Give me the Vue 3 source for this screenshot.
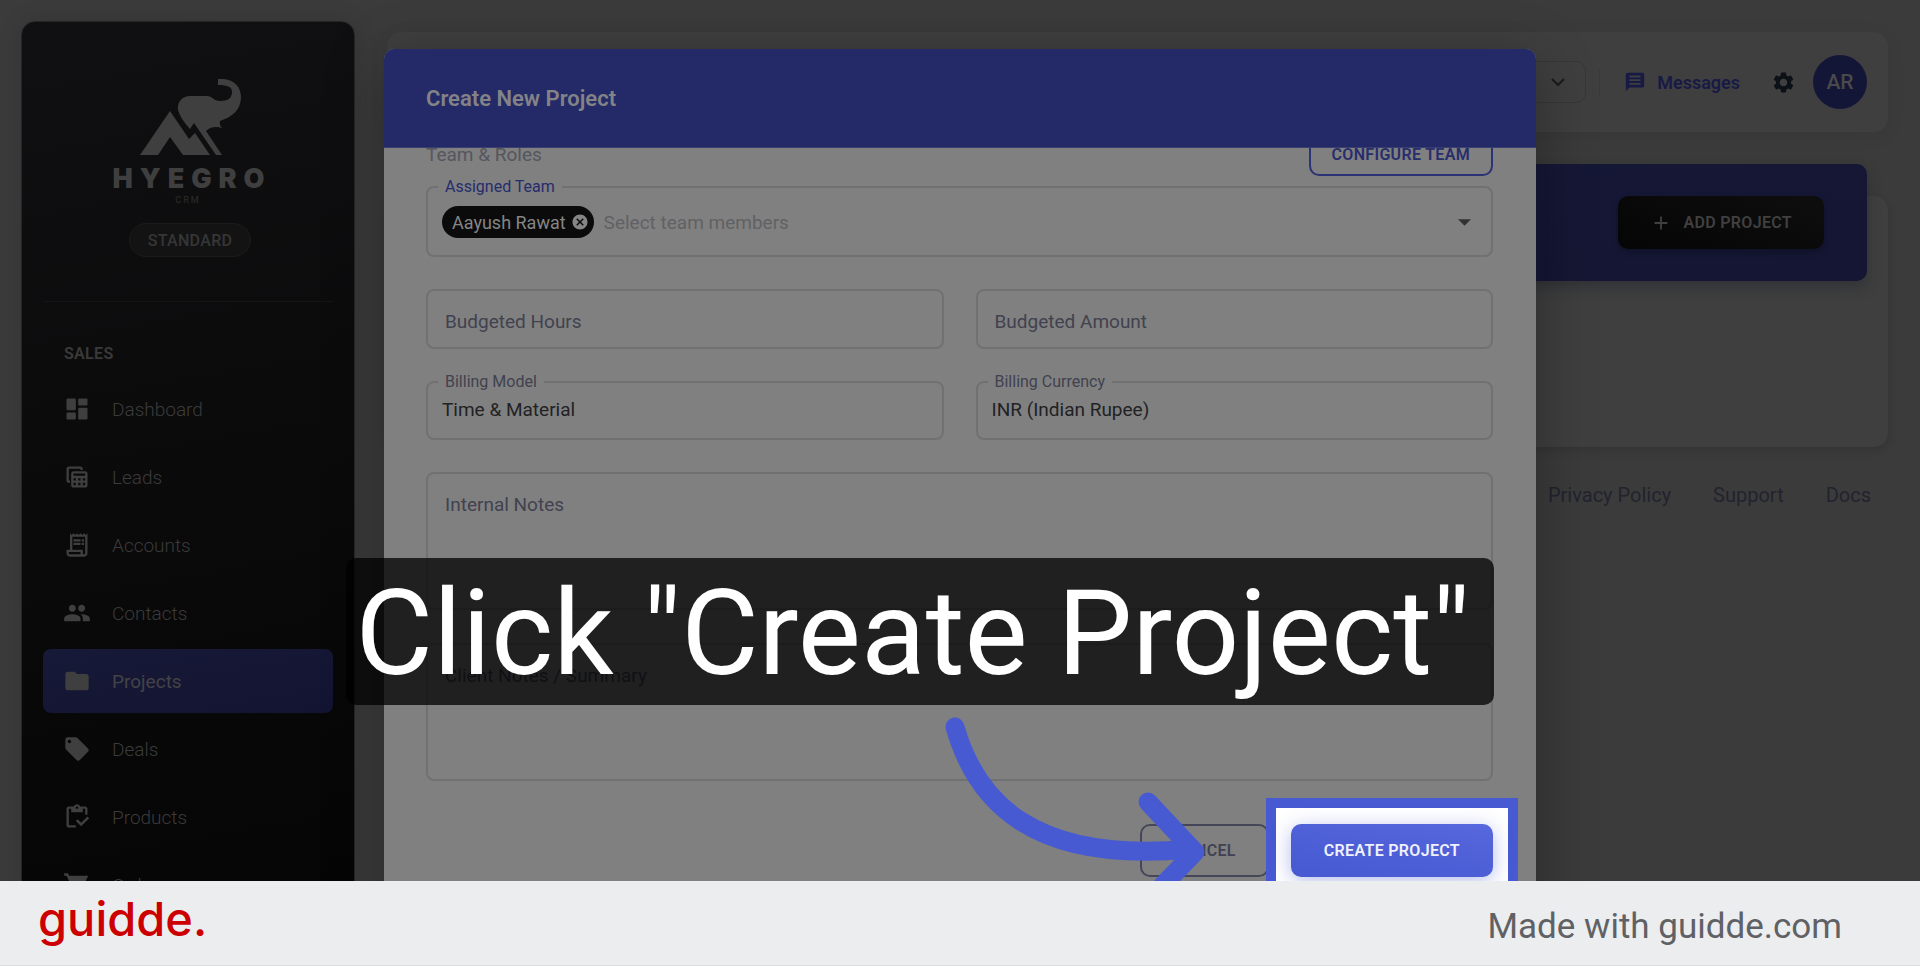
<script setup>
import { ref } from 'vue'

const navItems = [
  { label: 'Dashboard', icon: 'M4 3h6a1 1 0 0 1 1 1v8a1 1 0 0 1-1 1H4a1 1 0 0 1-1-1V4a1 1 0 0 1 1-1zM4 15h6a1 1 0 0 1 1 1v4a1 1 0 0 1-1 1H4a1 1 0 0 1-1-1v-4a1 1 0 0 1 1-1zM14 11h6a1 1 0 0 1 1 1v8a1 1 0 0 1-1 1h-6a1 1 0 0 1-1-1v-8a1 1 0 0 1 1-1zM14 3h6a1 1 0 0 1 1 1v4a1 1 0 0 1-1 1h-6a1 1 0 0 1-1-1V4a1 1 0 0 1 1-1z' },
  { label: 'Leads', icon: 'M19 7H9c-1.1 0-2 .9-2 2v10c0 1.100.9 2 2 2h10c1.100 0 2-.9 2-2V9c0-1.100-.9-2-2-2zm0 2v2H9V9h10zm-6 6v-2h2v2h-2zm2 2v2h-2v-2h2zm-4-2H9v-2h2v2zm6-2h2v2h-2v-2zm-8 4h2v2H9v-2zm8 2v-2h2v2h-2zM6 17H5c-1.100 0-2-.9-2-2V5c0-1.100.9-2 2-2h10c1.100 0 2 .9 2 2v1h-2V5H5v10h1v2z' },
  { label: 'Accounts', icon: 'M19.500 3.500 18 2l-1.500 1.500L15 2l-1.500 1.500L12 2l-1.500 1.500L9 2 7.500 3.500 6 2v14H3v3c0 1.660 1.340 3 3 3h12c1.660 0 3-1.340 3-3V2l-1.500 1.500zM15 20H6c-.55 0-1-.45-1-1v-1h10v2zm4-1c0 .55-.45 1-1 1s-1-.45-1-1v-3H8V5h11v14zM9 7h6v2H9V7zm7 0h2v2h-2V7zM9 10h6v2H9v-2zm7 0h2v2h-2v-2z' },
  { label: 'Contacts', icon: 'M16 11c1.660 0 2.990-1.340 2.990-3S17.660 5 16 5s-3 1.340-3 3 1.340 3 3 3zm-8 0c1.660 0 2.990-1.340 2.990-3S9.660 5 8 5 5 6.340 5 8s1.340 3 3 3zm0 2c-2.330 0-7 1.170-7 3.500V19h14v-2.500c0-2.330-4.670-3.500-7-3.500zm8 0c-.29 0-.62.02-.97.05 1.160.84 1.970 1.970 1.970 3.450V19h6v-2.500c0-2.330-4.670-3.500-7-3.500z' },
  { label: 'Projects', active: true, icon: 'M10 4H4c-1.100 0-1.990.9-1.990 2L2 18c0 1.100.9 2 2 2h16c1.100 0 2-.9 2-2V8c0-1.100-.9-2-2-2h-8l-2-2z' },
  { label: 'Deals', icon: 'm21.410 11.580-9-9C12.050 2.220 11.550 2 11 2H4c-1.100 0-2 .9-2 2v7c0 .55.22 1.050.59 1.420l9 9c.36.36.86.58 1.410.58s1.050-.22 1.410-.59l7-7c.37-.36.59-.86.59-1.410s-.23-1.060-.59-1.420zM5.500 7C4.670 7 4 6.330 4 5.500S4.670 4 5.500 4 7 4.670 7 5.500 6.330 7 5.500 7z' },
  { label: 'Products', icon: 'M5 5h2v3h10V5h2v5h2V5c0-1.100-.9-2-2-2h-4.180C14.400 1.840 13.300 1 12 1s-2.400.84-2.820 2H5c-1.100 0-2 .9-2 2v14c0 1.100.9 2 2 2h6v-2H5V5zm7-2c.55 0 1 .45 1 1s-.45 1-1 1-1-.45-1-1 .45-1 1-1zM21 11.500 15.510 17l-3.010-3-1.500 1.500 4.510 4.500L22.500 13z' },
  { label: 'Orders', icon: 'M7 18c-1.100 0-1.990.9-1.990 2S5.900 22 7 22s2-.9 2-2-.9-2-2-2zM1 2v2h2l3.600 7.590-1.350 2.450C4.520 15.370 5.480 17 7 17h12v-2H7.420l1.130-2h7.450c.75 0 1.410-.41 1.750-1.030L21.700 4H5.210l-.94-2H1zm16 16c-1.100 0-1.990.9-1.990 2s.89 2 1.990 2 2-.9 2-2-.9-2-2-2z' },
]
const model = ref('Time & Material')
const currency = ref('INR (Indian Rupee)')
</script>

<template>
  <div class="page">
    <div class="stage">
      <aside class="sidebar">
        <div class="brand">
          <svg class="mark" viewBox="0 0 102 78" aria-hidden="true">
            <path d="M0 76 30 32 49 60 55 54 70 76H43L30 58 18 76Z" />
            <path d="M38 31C37 23 42 17 50 17H67C72 17 74 22 80 22C88 22 92 19 92 13C92 8 88 6 78 6V0C93-1 101 7 101 18C101 31 92 38 80 42Q79 46 82 49Q72 46 66 52L82 76H76L54 44 50 50Q40 39 38 31Z" />
          </svg>
          <div class="brand-name">HYEGRO</div>
          <div class="brand-sub">CRM</div>
          <div class="plan">STANDARD</div>
        </div>
        <h2 class="section">SALES</h2>
        <nav class="nav">
          <a v-for="item in navItems" :key="item.label" href="#" :class="{ active: item.active }">
            <svg viewBox="0 0 24 24" aria-hidden="true"><path fill-rule="evenodd" :d="item.icon" /></svg>
            <span>{{ item.label }}</span>
          </a>
        </nav>
      </aside>

      <main class="content">
        <header class="topbar">
          <button class="company" aria-label="Company">
            <svg viewBox="0 0 24 24" aria-hidden="true"><path d="m6 9 6 6 6-6" /></svg>
          </button>
          <span class="rule"></span>
          <a href="#" class="messages">
            <svg viewBox="0 0 24 24" aria-hidden="true"><path fill-rule="evenodd" d="M20 2H4c-1.100 0-2 .9-2 2v18l4-4h14c1.100 0 2-.9 2-2V4c0-1.100-.9-2-2-2zM6 5h12v2H6zM6 9h12v2H6zM6 13h12v2H6z" /></svg>
            Messages
          </a>
          <button class="gear" aria-label="Settings">
            <svg viewBox="0 0 24 24" aria-hidden="true"><path d="M19.140 12.940c.04-.3.06-.61.06-.94 0-.32-.02-.64-.07-.94l2.030-1.580c.18-.14.23-.41.12-.61l-1.920-3.320c-.12-.22-.37-.29-.59-.22l-2.390.96c-.5-.38-1.030-.7-1.620-.94l-.36-2.540c-.04-.24-.24-.41-.48-.41h-3.840c-.24 0-.43.17-.47.41l-.36 2.540c-.59.24-1.130.57-1.620.94l-2.390-.96c-.22-.08-.47 0-.59.22L2.740 8.870c-.12.21-.08.47.12.61l2.030 1.580c-.05.3-.09.63-.09.94s.02.64.07.94l-2.030 1.580c-.18.14-.23.41-.12.61l1.920 3.320c.12.22.37.29.59.22l2.390-.96c.5.38 1.030.7 1.620.94l.36 2.540c.05.24.24.41.48.41h3.840c.24 0 .44-.17.47-.41l.36-2.540c.59-.24 1.130-.56 1.620-.94l2.390.96c.22.08.47 0 .59-.22l1.920-3.320c.12-.22.07-.47-.12-.61l-2.010-1.580zM12 15.600c-1.980 0-3.600-1.620-3.600-3.600s1.620-3.600 3.600-3.600 3.600 1.620 3.600 3.600-1.620 3.600-3.600 3.600z" /></svg>
          </button>
          <span class="avatar">AR</span>
        </header>
        <section class="projects">
          <div class="banner">
            <button class="add">
              <svg viewBox="0 0 24 24" aria-hidden="true"><path d="M12 5v14M5 12h14" /></svg>
              ADD PROJECT
            </button>
          </div>
        </section>
        <footer class="links">
          <a href="#">Privacy Policy</a>
          <a href="#">Support</a>
          <a href="#">Docs</a>
        </footer>
      </main>

      <div class="modal" role="dialog" aria-labelledby="dialog-title">
        <h1 id="dialog-title" class="modal-head">Create New Project</h1>
        <form class="modal-body" @submit.prevent>
          <div class="team-row">
            <span>Team &amp; Roles</span>
            <button type="button" class="configure">CONFIGURE TEAM</button>
          </div>
          <div class="field team">
            <label for="team" class="accent">Assigned Team</label>
            <span class="chip">
              Aayush Rawat
              <svg viewBox="0 0 24 24" aria-hidden="true"><path d="M12 2C6.470 2 2 6.470 2 12s4.470 10 10 10 10-4.470 10-10S17.530 2 12 2zm5 13.590L15.590 17 12 13.410 8.410 17 7 15.590 10.590 12 7 8.410 8.410 7 12 10.590 15.590 7 17 8.410 13.410 12 17 15.590z" /></svg>
            </span>
            <input id="team" type="text" placeholder="Select team members" />
            <svg class="caret" viewBox="0 0 12 6" aria-hidden="true"><path d="M0 0h12L6 6z" /></svg>
          </div>
          <div class="grid">
            <input class="box" type="text" placeholder="Budgeted Hours" aria-label="Budgeted Hours" />
            <input class="box" type="text" placeholder="Budgeted Amount" aria-label="Budgeted Amount" />
            <div class="field">
              <label for="model">Billing Model</label>
              <select id="model" v-model="model"><option>Time &amp; Material</option></select>
            </div>
            <div class="field">
              <label for="currency">Billing Currency</label>
              <select id="currency" v-model="currency"><option>INR (Indian Rupee)</option></select>
            </div>
          </div>
          <textarea class="box" placeholder="Internal Notes" aria-label="Internal Notes"></textarea>
          <textarea class="box" placeholder="Client Notes / Summary" aria-label="Client Notes / Summary"></textarea>
          <div class="actions">
            <button type="button" class="cancel">CANCEL</button>
            <div class="target">
              <button type="submit" class="create">CREATE PROJECT</button>
              <svg class="arrow" viewBox="0 0 280 200" aria-hidden="true">
                <path d="M20 12C41 86 97 149 255 134M213 87 260 137 207 192" />
              </svg>
            </div>
          </div>
        </form>
      </div>

      <div class="caption">Click "Create Project"</div>
    </div>

    <footer class="credit">
      <span class="logo">guidde.</span>
      <span class="made">Made with guidde.com</span>
    </footer>
  </div>
</template>

<style>
body { margin: 0; }
</style>

<style scoped>
* { box-sizing: border-box; }
.page { height: 100vh; display: flex; flex-direction: column; font-family: Roboto, "Liberation Sans", sans-serif; font-size: 19px; overflow: hidden; }
button, input, select, textarea { font: inherit; margin: 0; }
button { display: flex; align-items: center; justify-content: center; }
a { text-decoration: none; color: inherit; }
svg { display: block; fill: currentColor; flex: none; }

.stage { flex: 1; min-height: 0; position: relative; overflow: hidden; display: flex; align-items: flex-start; gap: 32px; padding: 21px 32px 0 21px; background: #3b3b3b; }

.sidebar { width: 334px; flex: none; height: 1000px; border: 1px solid #262627; border-radius: 14px; padding: 57px 21px 0; background: linear-gradient(170deg, #101012, #0b0b0c 40%, #050505 90%); color: #3f3f3f; box-shadow: 0 0 24px rgba(0, 0, 0, 0.12); }
.brand { display: flex; flex-direction: column; align-items: center; height: 223px; border-bottom: 1px solid #151516; }
.mark { width: 102px; height: 78px; margin-left: 6px; }
.brand-name { font-family: Inter, sans-serif; font-weight: 900; font-size: 27px; line-height: 32px; letter-spacing: 7px; margin: 6px 0 0 8px; }
.brand-sub { font-size: 9px; line-height: 10px; letter-spacing: 2px; color: #2d2d2d; }
.plan { margin: 18px 0 0 4px; height: 34px; padding: 0 18px; border: 1px solid #1b1b1c; border-radius: 17px; background: #131314; display: flex; align-items: center; font-size: 16px; font-weight: 500; letter-spacing: 0.02em; color: #363636; }
.section { margin: 40px 0 11px 21px; font-size: 16px; line-height: 24px; font-weight: 600; letter-spacing: 0.02em; color: #3a3a3a; }
.nav { display: flex; flex-direction: column; gap: 4px; }
.nav a { height: 64px; border-radius: 8px; padding-left: 20px; display: flex; align-items: center; gap: 21px; font-weight: 300; color: #3b3b3b; }
.nav svg { width: 28px; height: 28px; color: #3f3f3f; }
.nav .active { background: linear-gradient(170deg, #171938, #121431); font-weight: 400; color: #434346; }

.content { flex: 1; min-width: 0; }
.topbar { margin-top: 11px; height: 100px; border-radius: 14px; background: #3f3f3f; display: flex; align-items: center; justify-content: flex-end; padding-right: 21px; box-shadow: 0 4px 20px rgba(0, 0, 0, 0.06); }
.company { width: 200px; height: 42px; justify-content: flex-end; padding: 0 15px; border: 1px solid #373737; border-radius: 10px; background: none; color: #1a1a1b; }
.company svg { width: 24px; height: 24px; fill: none; stroke: currentColor; stroke-width: 2; }
.rule { width: 1px; height: 27px; background: #393939; margin: 0 24px 0 13px; }
.messages { display: flex; align-items: center; gap: 11px; font-size: 18px; font-weight: 600; color: #181a45; }
.messages svg { width: 22px; height: 22px; }
.gear { border: 0; padding: 0; background: none; color: #0c1118; margin: 0 17px 0 31px; }
.gear svg { width: 25px; height: 25px; }
.avatar { width: 54px; height: 54px; border-radius: 50%; background: #141638; color: #4a4a4a; font-size: 21px; font-weight: 500; display: grid; place-items: center; }
.projects { margin-top: 64px; height: 251px; border-radius: 14px; background: #3f3f3f; padding: 0 21px; box-shadow: 0 3px 10px rgba(0, 0, 0, 0.14); }
.banner { position: relative; top: -32px; height: 117px; border-radius: 10px; background: linear-gradient(170deg, #171939, #141633); display: flex; align-items: center; justify-content: flex-end; padding-right: 43px; box-shadow: 0 6px 14px rgba(20, 30, 40, 0.35); }
.add { height: 53px; padding: 0 32px; gap: 12px; border: 0; border-radius: 10px; background: linear-gradient(20deg, #050505, #0e0e0f); color: #404040; font-size: 16px; font-weight: 600; box-shadow: 0 3px 6px rgba(0, 0, 0, 0.25); letter-spacing: 0.02em; }
.add svg { width: 22px; height: 22px; fill: none; stroke: currentColor; stroke-width: 2; }
.links { display: flex; justify-content: flex-end; gap: 42px; padding: 36px 17px 0 0; font-size: 20px; line-height: 24px; color: #22232e; }

.modal { position: absolute; top: 49px; bottom: -60px; left: 20%; width: 60%; border-radius: 10px 10px 0 0; overflow: hidden; background: #808080; display: flex; flex-direction: column; box-shadow: 0 12px 60px rgba(0, 0, 0, 0.3); }
.modal-head { margin: 0; height: 99px; flex: none; padding: 0 42px; display: flex; align-items: center; background: #242a68; border-bottom: 1px solid #3a3f72; color: #838387; font-size: 22px; font-weight: 600; }
.modal-body { flex: 1; min-height: 0; overflow: hidden; padding: 0 43px 0 42px; display: flex; flex-direction: column; }
.team-row { flex: none; height: 43px; margin: -15px 0 10px; display: flex; align-items: center; justify-content: space-between; color: #55565f; font-weight: 400; }
.configure { height: 43px; padding: 0 21px; border: 2px solid #2b3275; border-radius: 10px; background: none; color: #272d6d; font-size: 16px; font-weight: 600; letter-spacing: 0.02em; }
.field, .box { border: 2px solid #717173; border-radius: 8px; background: none; color: #212225; min-width: 0; outline: 0; }
.box { height: 60px; padding: 4px 17px 0; flex: none; resize: none; }
.box::placeholder { color: #41424f; opacity: 1; }
.field { position: relative; display: flex; align-items: center; height: 59px; }
.field label { position: absolute; top: -11px; left: 10px; padding: 0 7px; background: #808080; color: #41424f; font-size: 16px; line-height: 20px; }
.field .accent { color: #262c6d; }
.field select { appearance: none; border: 0; background: none; color: inherit; width: 100%; height: 55px; padding: 0 14px 2px; outline: 0; }
.team { height: 71px; flex: none; padding: 1px 20px 0 14px; gap: 10px; }
.chip { height: 32px; border-radius: 16px; background: #0b0b0c; color: #858585; font-size: 18px; display: flex; align-items: center; gap: 5px; padding: 0 5px 0 10px; }
.chip svg { width: 18px; height: 18px; }
.team input { flex: 1; border: 0; padding: 0; background: none; outline: 0; }
.team input::placeholder { color: #616164; opacity: 1; }
.caret { width: 13px; height: 7px; color: #323235; }
.grid { display: grid; grid-template-columns: 1fr 1fr; gap: 32px; margin: 32px 0; }
textarea.box { height: 138px; padding: 19px 17px; margin-bottom: 33px; line-height: 24px; display: block; }
.actions { flex: none; display: flex; justify-content: flex-end; gap: 22px; margin-top: 10px; }
.cancel, .create { height: 53px; padding: 0 33px; border-radius: 10px; font-size: 16px; font-weight: 600; letter-spacing: 0.02em; }
.cancel { padding: 0 31px; border: 2px solid #454759; background: none; color: #414254; }
.target { position: relative; z-index: 1; }
.target::before { content: ""; position: absolute; inset: -26px -25px; border: 10px solid #475ad2; background: #fff; }
.create { position: relative; border: 0; background: linear-gradient(10deg, #4659d0, #5767de); color: #f0f1fc; box-shadow: 0 4px 20px rgba(71, 89, 208, 0.4); }
.arrow { position: absolute; width: 280px; height: 200px; right: 278px; top: -109px; fill: none; stroke: #475ad2; stroke-width: 19; stroke-linecap: round; stroke-linejoin: round; }

.caption { position: absolute; top: 558px; left: 18%; height: 147px; padding: 0 24px 0 10px; border-radius: 10px; background: rgba(0, 0, 0, 0.75); color: #fff; font-size: 119px; line-height: 152px; white-space: nowrap; }

.credit { position: relative; height: 85px; flex: none; display: flex; align-items: center; justify-content: space-between; padding: 0 78px 0 38px; background: #ecedef; border-bottom: 1px solid #dcdde0; }
.logo { font-family: Inter, sans-serif; font-size: 47px; line-height: 60px; font-weight: 500; color: #c00; padding-bottom: 8px; }
.made { font-size: 35px; color: #606164; padding-top: 7px; }
</style>
